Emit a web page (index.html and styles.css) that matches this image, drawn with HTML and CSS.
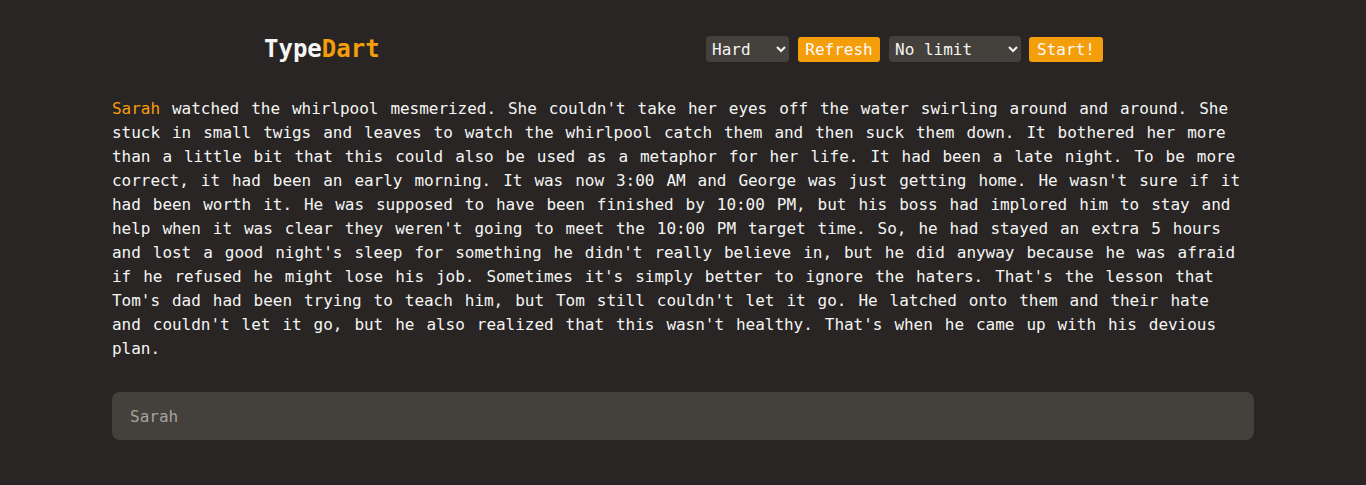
FILE: index.html
```html
<!DOCTYPE html>
<html lang="en">
<head>
<meta charset="utf-8">
<title>TypeDart</title>
<link rel="stylesheet" href="styles.css">
</head>
<body>
<div class="page">
  <header class="header">
    <h1 class="logo">Type<span class="accent">Dart</span></h1>
    <div class="controls">
      <select class="select select-diff">
        <option>Easy</option>
        <option>Medium</option>
        <option selected>Hard</option>
      </select>
      <button class="btn">Refresh</button>
      <select class="select select-time">
        <option selected>No limit</option>
        <option>30 seconds</option>
        <option>60 seconds</option>
      </select>
      <button class="btn btn-start">Start!</button>
    </div>
  </header>
  <p class="passage"><span class="current">Sarah</span> watched the whirlpool mesmerized. She couldn't take her eyes off the water swirling around and around. She stuck in small twigs and leaves to watch the whirlpool catch them and then suck them down. It bothered her more than a little bit that this could also be used as a metaphor for her life. It had been a late night. To be more correct, it had been an early morning. It was now 3:00 AM and George was just getting home. He wasn't sure if it had been worth it. He was supposed to have been finished by 10:00 PM, but his boss had implored him to stay and help when it was clear they weren't going to meet the 10:00 PM target time. So, he had stayed an extra 5 hours and lost a good night's sleep for something he didn't really believe in, but he did anyway because he was afraid if he refused he might lose his job. Sometimes it's simply better to ignore the haters. That's the lesson that Tom's dad had been trying to teach him, but Tom still couldn't let it go. He latched onto them and their hate and couldn't let it go, but he also realized that this wasn't healthy. That's when he came up with his devious plan.</p>
  <input class="typing" type="text" placeholder="Sarah">
</div>
</body>
</html>
```

FILE: styles.css
```css
* { box-sizing: border-box; }
html, body {
  margin: 0;
  padding: 0;
  background: #292524;
}
body {
  font-family: "DejaVu Sans Mono", "Liberation Mono", monospace;
  color: #f5f5f4;
}
.page {
  width: 1142px;
  margin: 0 auto;
}
.header {
  display: flex;
  align-items: center;
  justify-content: space-between;
  padding: 33px 151px 0 152px;
  height: 65px;
}
.logo {
  margin: 0;
  font-size: 24px;
  line-height: 32px;
  font-weight: bold;
  color: #f5f5f4;
}
.accent { color: #f59e0b; }
.controls {
  display: flex;
  align-items: center;
}
.select {
  height: 26px;
  border: none;
  border-radius: 4px;
  background-color: #44403c;
  color: #f5f5f4;
  font-family: "DejaVu Sans Mono", "Liberation Mono", monospace;
  font-size: 16px;
  padding: 0 2px;
  outline: none;
}
.select-diff { width: 83px; }
.select-time { width: 132px; margin-left: 9px; }
.btn {
  height: 25px;
  border: none;
  border-radius: 3px;
  background: #f59e0b;
  color: #fafaf9;
  font-family: "DejaVu Sans Mono", "Liberation Mono", monospace;
  font-size: 16px;
  padding: 0;
  width: 82px;
  margin-left: 9px;
  cursor: pointer;
}
.btn-start { width: 74px; margin-left: 8px; }
.passage {
  margin: 32px 0 0;
  padding-right: 9px;
  font-size: 16px;
  line-height: 24px;
  letter-spacing: -0.033px;
  word-spacing: 2.4px;
}
.current { color: #f59e0b; }
.typing {
  display: block;
  width: 100%;
  height: 48px;
  margin-top: 31px;
  border: none;
  border-radius: 8px;
  background: #44403c;
  color: #f5f5f4;
  font-family: "DejaVu Sans Mono", "Liberation Mono", monospace;
  font-size: 16px;
  padding: 1px 18px 0;
  outline: none;
}
.typing::placeholder { color: #a8a29e; }
```
